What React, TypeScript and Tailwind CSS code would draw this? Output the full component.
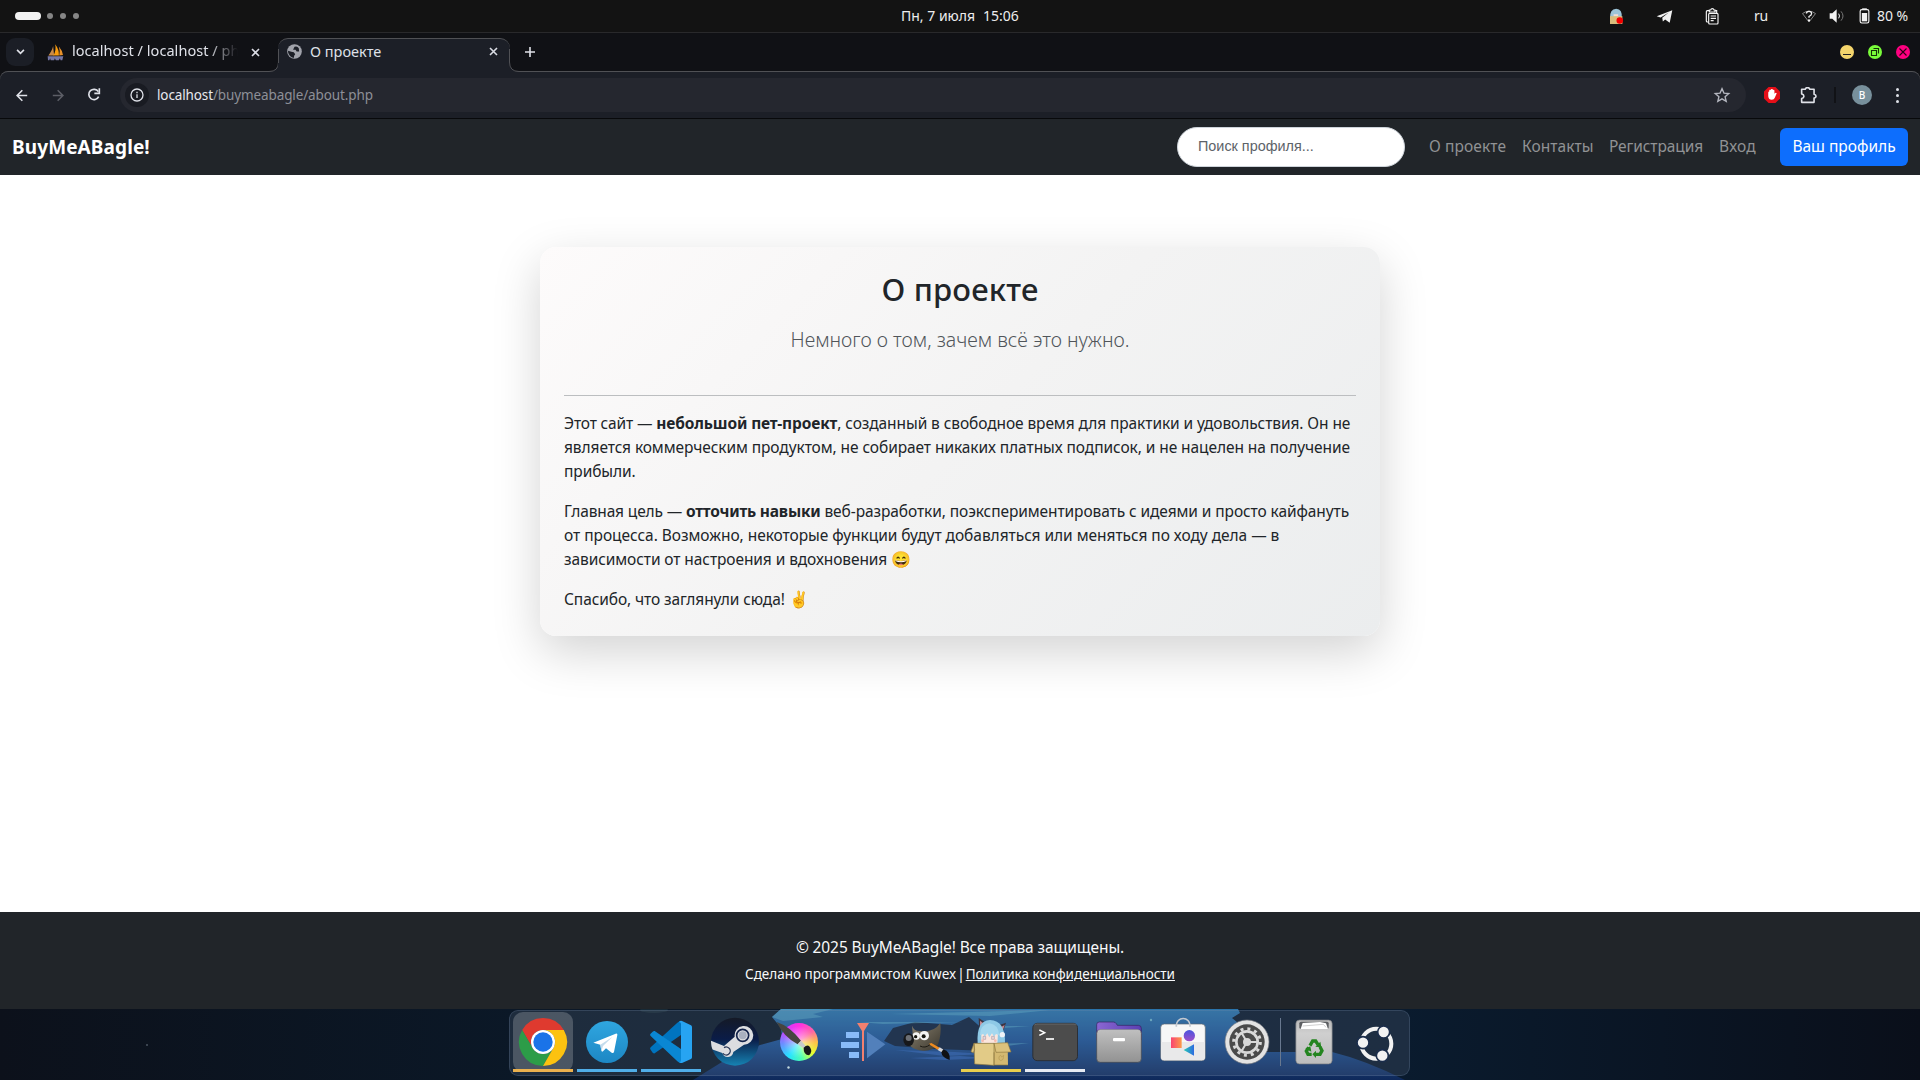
import type { ReactNode } from "react";

/* ---------- System bar ---------- */

function SystemBar() {
  return (
    <div className="flex h-8 items-center bg-[#131313] text-[14px] text-[#ededed]">
      <div className="flex w-[901px] items-center">
        <div className="ml-[15px] h-2 w-[26px] rounded-full bg-[#f2f2f2]" />
        <div className="ml-[6px] flex gap-[7px]">
          <div className="size-[6px] rounded-full bg-[#868686]" />
          <div className="size-[6px] rounded-full bg-[#868686]" />
          <div className="size-[6px] rounded-full bg-[#868686]" />
        </div>
      </div>
      <div className="flex pb-[2px] whitespace-pre">
        <span>Пн, 7 июля</span>
        <span className="ml-[8px]">15:06</span>
      </div>
      {/* tray */}
      <div className="ml-auto flex h-8 items-center">
        <svg viewBox="150 24 46 50" className="h-[17px] w-[15px]">
          <path d="M153 54 Q152 26 172 25 Q192 26 189 54Z" fill="#9cc4d8" />
          <path d="M164 42h14v8h-14z" fill="#f2ddd3" />
          <path d="M153 48h38v24h-38z" fill="#d9bd7c" />
          <circle cx="183" cy="61" r="10" fill="#f40000" />
        </svg>
        <svg viewBox="290 26 50 40" className="ml-[32px] h-[13px] w-[17px]">
          <path d="M291 45 L339 27 L331 65 L317 55 L310 61 L308 50 L328 34 L303 49Z" fill="#f2f2f2" />
        </svg>
        <svg viewBox="436 23 42 51" className="ml-[32px] h-[17px] w-[14px]" fill="none" stroke="#f2f2f2" strokeWidth="3.5">
          <path d="M446 65h-3q-3 0-3-3V34q0-3 3-3h6M466 31h5v7" />
          <path d="M449 35v-6h4q1-4 5-4t5 4h3v6z" />
          <rect x="447" y="39" width="28" height="32" rx="3" />
          <path d="M453 47h16M453 54h16M453 61h9" />
        </svg>
        <span className="ml-[35px] pb-[2px] tracking-[-0.2px]">ru</span>
        <svg viewBox="724 28 46 40" className="ml-[33px] h-[13px] w-[16px]" fill="none" stroke="#8a8a8a" strokeWidth="3">
          <path d="M747 65 L727 39 Q747 24 767 39Z" />
          <path d="M739 39q0-7 8-7t8 7q0 5-8 9v4" stroke="#f2f2f2" strokeWidth="4" />
          <circle cx="747" cy="60" r="1.5" stroke="#f2f2f2" strokeWidth="4" />
        </svg>
        <svg viewBox="808 27 48 42" className="ml-[12px] h-[14px] w-[16px]">
          <path d="M810 40h8l13-12v40l-13-12h-8z" fill="#f2f2f2" />
          <path d="M837 41q5 7 0 14" stroke="#f2f2f2" strokeWidth="3" fill="none" />
          <path d="M844 34q12 14 0 28" stroke="#777" strokeWidth="3" fill="none" />
        </svg>
        <svg viewBox="899 23 32 48" className="ml-[14px] h-[16px] w-[11px]">
          <path d="M908 24h14v5h-14z" fill="#f2f2f2" />
          <rect x="902" y="28" width="26" height="40" rx="5" fill="none" stroke="#f2f2f2" strokeWidth="3.5" />
          <path d="M907 38h16v25h-16z" fill="#f2f2f2" />
        </svg>
        <span className="mr-[12px] ml-[7px] pb-[2px] tracking-[-0.07px]">80 %</span>
      </div>
    </div>
  );
}

/* ---------- Browser chrome ---------- */

function CloseMark() {
  return (
    <svg viewBox="0 0 9 9" className="size-[9px]" stroke="#dadce4" strokeWidth="1.6">
      <path d="M1 1l7 7M8 1l-7 7" />
    </svg>
  );
}

function SailLogo() {
  return (
    <svg viewBox="132 132 50 50" className="size-[17px]">
      <path d="M136 166 Q148 150 150 138 L153 166Z" fill="#c98a48" />
      <path d="M151 166 Q160 150 156 133 Q168 148 167 166Z" fill="#f89c0e" />
      <path d="M168 166 Q171 150 167 139 Q178 152 179 164Z" fill="#e8912a" />
      <path d="M134 168h46l-3 12h-5l-2-6-3 6h-9l-3-6-2 6h-10l-2-6-2 6h-4z" fill="#7678a6" />
    </svg>
  );
}

function TabStrip() {
  return (
    <div className="relative z-10 flex h-[39px] border-t border-[#29292b] bg-[#101115] text-[14.500px] text-[#dfe1e8]">
      <div className="mt-[5px] ml-[6px] flex h-[28px] w-[28px] items-center justify-center rounded-[9px] bg-[#1b1e26]">
        <svg viewBox="0 0 10 7" className="h-[6px] w-[9px]" fill="none" stroke="#dfe1e8" strokeWidth="1.9">
          <path d="M1 1l4 4 4-4" />
        </svg>
      </div>
      <div className="ml-[13px] flex h-[38px] w-[222px] items-center">
        <SailLogo />
        <div className="ml-[8px] w-[172px] pb-[2px] whitespace-nowrap tracking-[0.05px] [mask-image:linear-gradient(to_right,#000_136px,transparent_166px)]">
          localhost / localhost / php
        </div>
        <div className="ml-[7px]">
          <CloseMark />
        </div>
      </div>
      <svg viewBox="0 0 10 10" className="mt-[29px] -mr-px size-[10px]" fill="#1c1f27">
        <path d="M0 9.500Q9.500 9.500 9.500 0H10V10H0Z" />
        <path d="M0 9.500Q9.500 9.500 9.500 0" fill="none" stroke="#505155" />
      </svg>
      <div className="mt-[5px] flex h-[34px] w-[232px] items-center rounded-t-[10px] border-t border-[#505155] bg-[#1c1f27] bg-[linear-gradient(#505155,#505155),linear-gradient(#505155,#505155)] bg-[length:1px_14px] bg-[position:left_10px,right_10px] bg-no-repeat pr-[12px] pb-[8px] pl-[9px]">
        <svg viewBox="803 135 42 42" className="size-[15px]">
          <circle cx="824" cy="156" r="20.500" fill="#a1a3ab" />
          <path d="M824 143q8-3 12 4l1 9h-7l-3-5h-7zM806 154l9 3 7 1 4 6-3 4-1 6q-13-3-16-16z" fill="#1c1f27" />
        </svg>
        <span className="ml-[8px]">О проекте</span>
        <div className="ml-auto">
          <CloseMark />
        </div>
      </div>
      <svg viewBox="0 0 10 10" className="mt-[29px] -ml-px size-[10px]" fill="#1c1f27">
        <path d="M10 9.500Q0.500 9.500 0.500 0H0V10H10Z" />
        <path d="M10 9.500Q0.500 9.500 0.500 0" fill="none" stroke="#505155" />
      </svg>
      <svg viewBox="0 0 10 10" className="mt-[14px] ml-[6px] size-[10px]" stroke="#dfe1e8" strokeWidth="1.6">
        <path d="M5 0v10M0 5h10" />
      </svg>
      <div className="mt-[12px] mr-[10px] ml-auto flex gap-[14px]">
        <svg viewBox="0 0 14 14" className="size-[14px]">
          <circle cx="7" cy="7" r="7" fill="#f4d56c" />
          <path d="M3 9.500h8" stroke="#222" />
        </svg>
        <svg viewBox="0 0 14 14" className="size-[14px]">
          <circle cx="7" cy="7" r="7" fill="#79fc3a" />
          <path d="M3.500 5.500h5v5h-5zM5.500 3.500h5v5" fill="none" stroke="#143008" strokeWidth="1.1" />
        </svg>
        <svg viewBox="0 0 14 14" className="size-[14px]">
          <circle cx="7" cy="7" r="7" fill="#ff0080" />
          <path d="M3.500 3.500l7 7M10.500 3.500l-7 7" stroke="#2c0016" strokeWidth="1.1" />
        </svg>
      </div>
    </div>
  );
}

function Toolbar() {
  return (
    <div className="bg-[#101115]">
      <div className="flex h-[48px] items-center rounded-t-[8px] border-b border-b-[#08090b] bg-[#1c1f27] pt-px [box-shadow:inset_0_1px_0_#505155]">
        <svg viewBox="44 265 36 40" className="ml-[16px] h-[13px] w-[12px]" fill="none" stroke="#dfe1e8" strokeWidth="5">
          <path d="M78 285H48M63 269l-16 16 16 16" />
        </svg>
        <svg viewBox="144 265 36 40" className="ml-[24px] h-[13px] w-[12px]" fill="none" stroke="#5c5e66" strokeWidth="5">
          <path d="M146 285h30M161 269l16 16-16 16" />
        </svg>
        <svg viewBox="244 264 40 42" className="ml-[23px] h-[14px] w-[14px]" fill="none" stroke="#dfe1e8" strokeWidth="5">
          <path d="M277 275a15.500 15.500 0 1 0 1 15" />
          <path d="M280 265v15h-15" />
        </svg>
        <div className="ml-[19px] flex h-[34px] w-[1626px] items-center rounded-full bg-[#25272f] pr-[15px] pl-[5px]">
          <div className="flex size-[24px] items-center justify-center rounded-full bg-[#191b22]">
            <svg viewBox="0 0 14 14" className="size-[14px]" fill="none" stroke="#dfe1e8" strokeWidth="1.3">
              <circle cx="7" cy="7" r="6" />
              <path d="M7 6.300V10M7 3.800v1.400" />
            </svg>
          </div>
          <div className="ml-[8px] text-[13.500px] tracking-[-0.12px] text-[#8d8f97]">
            <span className="text-[#e8e9ef]">localhost</span>/buymeabagle/about.php
          </div>
          <svg viewBox="0 0 24 24" className="ml-auto size-[18px]" fill="none" stroke="#b4b6bf" strokeWidth="1.800">
            <path d="M12 3.500l2.600 6 6.400.500-4.900 4.200 1.500 6.300L12 17.100l-5.600 3.400 1.500-6.300L3 10l6.400-.5z" />
          </svg>
        </div>
        <svg viewBox="611 261 49 49" className="ml-[18px] size-[16px]">
          <path d="M625 261h21l14 14v21l-14 14h-21l-14-14v-21z" fill="#e60f18" />
          <path d="M624 278q0-3 3-3v-3q0-3 4-2 1-3 4-3t4 3q4-1 4 3v9q4-6 7-2l-6 14q-2 6-9 6-10 0-11-11z" fill="#fff" />
        </svg>
        <svg viewBox="720 257 52 52" className="ml-[20px] size-[17px]" fill="none" stroke="#dfe1e8" strokeWidth="5">
          <path d="M725 264h11q1-5 7-5t7 5h13v15q6 1 6 6t-6 6v13h-38v-12q7-2 7-7t-7-7z" strokeLinejoin="round" />
        </svg>
        <div className="ml-[17px] h-[16px] w-[2px] bg-[#111216]" />
        <div className="ml-[16px] flex size-[20px] items-center justify-center rounded-full bg-[#78909c] text-[10px] font-medium text-white">
          B
        </div>
        <div className="ml-[24px] flex flex-col gap-[3px]">
          <div className="size-[3px] rounded-full bg-[#dfe1e8]" />
          <div className="size-[3px] rounded-full bg-[#dfe1e8]" />
          <div className="size-[3px] rounded-full bg-[#dfe1e8]" />
        </div>
      </div>
    </div>
  );
}

/* ---------- Site ---------- */

function SiteNav() {
  return (
    <nav className="flex h-[56px] items-center bg-[#212529] pr-3 pl-3 text-[15.500px] text-[#909294]">
      <span className="text-[19px] font-bold tracking-[0.1px] text-white">BuyMeABagle!</span>
      <div className="ml-auto flex h-[40px] w-[228px] items-center rounded-full border border-[#ced4da] bg-white pl-[20px] font-['Liberation_Sans',sans-serif] text-[14.400px] text-[#5d6369]">
        Поиск профиля...
      </div>
      <span className="ml-[24px] w-[93px] tracking-[0.09px]">О проекте</span>
      <span className="w-[87px] tracking-[0.05px]">Контакты</span>
      <span className="w-[110px] tracking-[-0.1px]">Регистрация</span>
      <span className="w-[61px] tracking-[0.25px]">Вход</span>
      <button className="h-[38px] w-[128px] rounded-[6px] bg-[#0d6efd] text-white">Ваш профиль</button>
    </nav>
  );
}

function AboutCard() {
  return (
    <section className="mx-auto h-[389px] w-[840px] rounded-2xl bg-[linear-gradient(135deg,#fdfbfb_0%,#f3f3f3_50%,#ebedee_100%)] px-6 pt-[23px] text-[15.500px] leading-6 tracking-[-0.09px] text-[#212529] shadow-[0_16px_48px_rgba(0,0,0,0.175)]">
      <h2 className="text-center text-[31px] leading-[38px] font-medium tracking-[0.2px]">О проекте</h2>
      <p className="mt-[17px] text-center text-[19.500px] leading-[30px] font-light tracking-normal text-[#50555a]">
        Немного о том, зачем всё это нужно.
      </p>
      <div className="mt-[40px] h-px bg-[#bcbec0]" />
      <div className="mt-[15px] whitespace-nowrap">
        <p>
          <span className="tracking-[-0.15px]">Этот сайт — </span>
          <b className="tracking-[-0.13px]">небольшой пет-проект</b>, созданный в свободное время для практики и
          удовольствия. Он не
          <br />
          <span className="tracking-[-0.08px]">
            является коммерческим продуктом, не собирает никаких платных подписок, и не нацелен на получение
          </span>
          <br />
          прибыли.
        </p>
        <p className="mt-4">
          <span className="tracking-[-0.15px]">Главная цель — </span>
          <b className="tracking-[-0.2px]">отточить навыки</b> веб-разработки, поэкспериментировать с идеями и просто
          кайфануть
          <br />
          <span className="tracking-[-0.04px]">
            от процесса. Возможно, некоторые функции будут добавляться или меняться по ходу дела — в
          </span>
          <br />
          зависимости от настроения и вдохновения <span className="text-[16px] leading-none">😄</span>
        </p>
        <p className="mt-4">
          Спасибо, что заглянули сюда! <span className="text-[16px] leading-none">✌️</span>
        </p>
      </div>
    </section>
  );
}

function SiteFooter() {
  return (
    <footer className="h-[97px] bg-[#212529] pt-[23px] text-center text-[#f8f9fa]">
      <p className="text-[15.500px] leading-6 tracking-[-0.11px]">© 2025 BuyMeABagle! Все права защищены.</p>
      <p className="mt-[5px] text-[13.500px] leading-[21px]">
        Сделано программистом Kuwex <span className="-mx-[2.500px]">|</span>{" "}
        <a className="underline">Политика конфиденциальности</a>
      </p>
    </footer>
  );
}

/* ---------- Desktop and dock ---------- */

function Wallpaper() {
  return (
    <svg viewBox="0 1009 1920 71" className="absolute inset-0 h-full w-full" preserveAspectRatio="none">
      <defs>
        <linearGradient id="sky" x1="0" x2="1">
          <stop offset="0" stopColor="#0c111b" />
          <stop offset=".27" stopColor="#0b1827" />
          <stop offset=".73" stopColor="#0a1b2e" />
          <stop offset="1" stopColor="#0a0f1a" />
        </linearGradient>
        <linearGradient id="sea" x1="0" y1="0" x2="0" y2="1">
          <stop offset="0" stopColor="#2a74aa" />
          <stop offset=".45" stopColor="#1c5294" />
          <stop offset="1" stopColor="#0f295a" />
        </linearGradient>
      </defs>
      <rect y="1009" width="1920" height="71" fill="url(#sky)" />
      <path
        d="M781 1009 L772 1017 L781 1028 L782 1039 L760 1045 L722 1062 L693 1080 H1405 Q1365 1060 1332 1052 H1262 L1256 1040 L1243 1027 L1232 1018 L1240 1013 L1238 1009Z"
        fill="url(#sea)"
      />
      <path d="M884 1041L893 1028 915 1022 952 1025 969 1017 985 1031 990 1051 935 1049 895 1046Z" fill="#10243f" />
      <path
        d="M781 1009h52l-20 5 10 3-40 4-11-4zM890 1014l160-4-60 6zM858 1022h105l-80 2zM985 1026h45l-40 3zM985 1044l44-1-30 4z"
        fill="#55a5c4"
        opacity=".55"
      />
      <path d="M895 1050l60 2 30 2-40 2zM910 1058l50-2 25 2-40 2z" fill="#2d62b4" opacity=".7" />
      <circle cx="788.500" cy="1067.500" r="1.200" fill="#d5eff0" />
      <circle cx="1151" cy="1020" r="1.200" fill="#6ab1c8" />
      <circle cx="147" cy="1045" r="1" fill="#4a5560" />
      <ellipse cx="654" cy="1010" rx="14" ry="3" fill="#4b6c6c" opacity=".2" />
    </svg>
  );
}

function ChromeIcon() {
  return (
    <svg viewBox="-6 -6 60 60">
      <path d="M24 12L44.800 12A24 24 0 0 0 3.200 12L13.600 30A12 12 0 0 1 24 12Z" fill="#df3a2f" />
      <path d="M34.400 30L24 48A24 24 0 0 1 3.200 12L13.600 30A12 12 0 0 0 34.400 30Z" fill="#2c9c48" />
      <path d="M24 12H44.800A24 24 0 0 1 24 48L34.400 30A12 12 0 0 0 24 12Z" fill="#fcc210" />
      <circle cx="24" cy="24" r="12" fill="#fff" />
      <circle cx="24" cy="24" r="9.700" fill="#1a73e8" />
    </svg>
  );
}

function TelegramIcon() {
  return (
    <svg viewBox="231 36 180 180">
      <defs>
        <linearGradient id="tg" x1="0" y1="0" x2="0" y2="1">
          <stop offset="0" stopColor="#2fa6e0" />
          <stop offset="1" stopColor="#1d87c4" />
        </linearGradient>
      </defs>
      <circle cx="321" cy="126" r="63" fill="url(#tg)" />
      <path d="M280 128L347 101Q353 99 352 105L342 156Q340 161 335 158L318 145 309 154Q305 157 304 151L301 134Z" fill="#fff" />
      <path d="M301 134L337 111 309 138 304 154Z" fill="#c4dcec" />
    </svg>
  );
}

function CodeIcon() {
  return (
    <svg viewBox="423 36 180 180">
      <path d="M451 148Q449 145 452 142L532 68Q537 63 544 63V104L464 160Q461 161 458 158Z" fill="#0074bf" />
      <path d="M451 102Q449 105 452 108L532 184Q537 189 544 189V148L464 93Q461 92 458 95Z" fill="#0a87d3" />
      <path d="M540 63Q543 62 546 63L573 76Q576 78 576 82V172Q576 175 573 177L546 189Q541 190 536 186 543 188 543 181V72Q543 65 536 67Z" fill="#27a4f2" />
    </svg>
  );
}

function SteamIcon() {
  return (
    <svg viewBox="615 36 180 180">
      <defs>
        <linearGradient id="st" x1="0" y1="0" x2="0" y2="1">
          <stop offset="0" stopColor="#151a26" />
          <stop offset=".45" stopColor="#0a1c48" />
          <stop offset="1" stopColor="#1683b3" />
        </linearGradient>
        <clipPath id="stc">
          <circle cx="705" cy="125" r="72" />
        </clipPath>
      </defs>
      <circle cx="705" cy="125" r="72" fill="url(#st)" />
      <g clipPath="url(#stc)">
        <path d="M630 121L672 138 704 110A28 28 0 1 1 732 134L700 156A17 17 0 0 1 667 159L630 146Z" fill="#dcdde0" />
        <circle cx="728" cy="106" r="18" fill="#dcdde0" stroke="#12224a" strokeWidth="5" />
        <circle cx="728" cy="106" r="12" fill="#a9b0bf" />
        <path d="M672 143a12 12 0 1 1-3 17" fill="none" stroke="#2a3a5a" strokeWidth="4" />
      </g>
    </svg>
  );
}

function KritaIcon() {
  return (
    <div className="relative size-[60px]">
      <div className="absolute top-[11px] left-[11px] size-[38px] rounded-full bg-[radial-gradient(circle,rgba(255,255,255,.6)_0%,rgba(255,255,255,0)_60%),conic-gradient(#ff2ee6,#ff62a8_50deg,#ffc04a_90deg,#e8ff30_130deg,#4dffb0_170deg,#25e4ff_215deg,#6d8cff_265deg,#d03cff_310deg,#ff2ee6)]" />
      <svg viewBox="807 36 180 180" className="absolute inset-0">
        <path d="M830 66Q868 78 903 122L893 133Q850 110 830 66Z" fill="#47453f" />
        <path d="M903 122L917 137 911 145 893 133Z" fill="#c9c9cb" />
        <path d="M911 143Q924 130 931 143T927 166Q910 164 911 143Z" fill="#17171a" />
      </svg>
    </div>
  );
}

function AlignIcon() {
  return (
    <svg viewBox="-21 36 180 180">
      <path d="M81 95L136 133 81 175Z" fill="#5280bb" />
      <path d="M18 96h39v18H18zM3 126h54v18H3zM27 156h30v18H27z" fill="#89bbf8" />
      <path d="M51 69h36L72 93v90h-6V93Z" fill="#f2806f" />
    </svg>
  );
}

function GimpIcon() {
  return (
    <svg viewBox="171 36 180 180">
      <defs>
        <linearGradient id="gm" x1="0" y1="0" x2="1" y2="1">
          <stop offset="0" stopColor="#8a8270" />
          <stop offset="1" stopColor="#3b372e" />
        </linearGradient>
      </defs>
      <path d="M216 77Q222 94 240 93 282 98 301 69 305 105 294 133 280 153 250 152 225 152 208 136 222 118 216 77Z" fill="url(#gm)" />
      <circle cx="229" cy="108" r="11" fill="#f5f5f3" />
      <circle cx="253" cy="107" r="14" fill="#f5f5f3" />
      <circle cx="227" cy="110" r="5" fill="#16160f" />
      <circle cx="251" cy="109" r="6" fill="#16160f" />
      <ellipse cx="206" cy="119" rx="16" ry="19" fill="#17181a" />
      <ellipse cx="206" cy="114" rx="9" ry="9" fill="#6d7075" />
      <path d="M266 132L274 129 299 143 294 150Z" fill="#ee8b20" />
      <path d="M299 142L311 149 305 157 293 150Z" fill="#d5d5d7" />
      <path d="M310 148Q332 155 329 180 305 172 304 157Z" fill="#101113" />
      <path d="M240 138Q255 146 270 134" stroke="#1e1b14" strokeWidth="3" fill="none" />
    </svg>
  );
}

function BoxedCharacterIcon() {
  return (
    <svg viewBox="363 36 180 180">
      <path d="M416 54L438 68 418 96ZM498 68L476 76 488 98Z" fill="#3c3440" />
      <path d="M420 62L430 70 420 84ZM494 75L482 82 488 92Z" fill="#c78791" />
      <path d="M413 130Q408 62 450 60 497 62 495 130Z" fill="#8ec9e6" />
      <path d="M424 98Q446 84 474 98L472 130H424Z" fill="#fbe6de" />
      <path d="M420 106Q420 74 448 70 476 74 478 106L468 102 462 110 456 100 448 112 442 100 434 110 430 102Z" fill="#a5d8ef" />
      <path d="M429 109h8v9h-8zM455 109h8v9h-8z" fill="#e8d9dc" stroke="#9a8d98" strokeWidth="1.500" />
      <circle cx="428" cy="122" r="4" fill="#f7b9ae" />
      <circle cx="466" cy="122" r="4" fill="#f7b9ae" />
      <circle cx="487" cy="104" r="8" fill="#f1f4f8" />
      <path d="M402 130H462V196L404 192Z" fill="#e2cb87" />
      <path d="M462 130H503L504 195H462Z" fill="#d4b971" />
      <path d="M402 130L393 155 400 158 404 150ZM462 130L503 128 513 156 468 157Z" fill="#dcc27c" stroke="#8f7840" strokeWidth="2" />
      <path d="M402 130H462V196L404 192ZM462 157V195H504" fill="none" stroke="#8f7840" strokeWidth="2" />
      <path d="M477 170l5-4 3 5 6-5-2 12q-7 8-12 0z" fill="none" stroke="#b69a55" strokeWidth="2" />
    </svg>
  );
}

function TerminalIcon() {
  return (
    <svg viewBox="555 36 180 180">
      <rect x="578.500" y="70" width="134" height="112" rx="13" fill="#4c4c4c" stroke="#2b2f36" strokeWidth="3" />
      <path d="M582 76q2-4 8-4h112q6 0 8 4" stroke="#7a7a7a" strokeWidth="2" fill="none" />
      <path d="M598 90L614 98 598 106" fill="none" stroke="#fff" strokeWidth="4.500" />
      <path d="M618 117h24" stroke="#fff" strokeWidth="5" />
    </svg>
  );
}

function FilesIcon() {
  return (
    <svg viewBox="747 36 180 180">
      <defs>
        <linearGradient id="fl" x1="0" y1="0" x2="0" y2="1">
          <stop offset="0" stopColor="#bfbfbf" />
          <stop offset="1" stopColor="#929292" />
        </linearGradient>
        <linearGradient id="fp" x1="0" x2="1">
          <stop offset="0" stopColor="#8b67d2" />
          <stop offset="1" stopColor="#5b3fb2" />
        </linearGradient>
      </defs>
      <path d="M770 110V74Q770 66 778 66H820Q826 66 829 71L832 76H895Q904 76 904 85V120H770Z" fill="url(#fp)" stroke="#30245c" strokeWidth="2" />
      <rect x="770" y="89" width="134" height="98" rx="11" fill="url(#fl)" stroke="#45484d" strokeWidth="2" />
      <path d="M774 94q3-4 8-4h110q6 0 9 4" stroke="#dadada" strokeWidth="2" fill="none" />
      <rect x="819" y="114" width="36" height="10" rx="3" fill="#fff" />
    </svg>
  );
}

function StoreIcon() {
  return (
    <svg viewBox="39 36 180 180">
      <defs>
        <linearGradient id="s1" x1="0" x2="1">
          <stop offset="0" stopColor="#fa4373" />
          <stop offset="1" stopColor="#fc9b49" />
        </linearGradient>
        <linearGradient id="s2" x1="0" y1="0" x2="0" y2="1">
          <stop offset="0" stopColor="#4855e0" />
          <stop offset="1" stopColor="#a14fc8" />
        </linearGradient>
        <linearGradient id="s3" x1="0" x2="1">
          <stop offset="0" stopColor="#26ccb4" />
          <stop offset="1" stopColor="#2e6ae0" />
        </linearGradient>
      </defs>
      <rect x="62" y="72" width="134" height="110" rx="11" fill="#f7f7f7" stroke="#5e6670" strokeWidth="2" />
      <path d="M109 80V76a20 20 0 0 1 41 0v4" fill="none" stroke="#c4c9d0" strokeWidth="5" />
      <path d="M63 126h132v45q0 10-10 10H73q-10 0-10-10z" fill="#e9e9ea" />
      <rect x="93" y="112" width="32" height="32" fill="url(#s1)" />
      <circle cx="148" cy="107" r="17" fill="url(#s2)" />
      <path d="M131 150L162 133V167Z" fill="url(#s3)" />
    </svg>
  );
}

function SettingsIcon() {
  return (
    <svg viewBox="231 36 180 180">
      <circle cx="321" cy="126" r="66" fill="#e3e3e3" stroke="#76797e" strokeWidth="2" />
      <circle cx="321" cy="126" r="53" fill="#4a4a4a" />
      <circle cx="321" cy="126" r="40" fill="none" stroke="#d8d8d8" strokeWidth="9" strokeDasharray="9 11.940" />
      <circle cx="321" cy="126" r="32" fill="none" stroke="#d8d8d8" strokeWidth="8" />
      <circle cx="321" cy="126" r="12" fill="#d8d8d8" />
      <path d="M321 126H352M321 126L305 99M321 126L305 153" stroke="#d8d8d8" strokeWidth="6" />
    </svg>
  );
}

function TrashIcon() {
  return (
    <svg viewBox="432 36 180 180">
      <defs>
        <linearGradient id="tr" x1="0" y1="0" x2="0" y2="1">
          <stop offset="0" stopColor="#b9b9b9" />
          <stop offset=".3" stopColor="#cfcfcf" />
          <stop offset="1" stopColor="#bdbdbd" />
        </linearGradient>
      </defs>
      <rect x="467.500" y="60" width="109" height="132" rx="11" fill="url(#tr)" stroke="#70747a" strokeWidth="2" />
      <rect x="478" y="65" width="88" height="22" rx="5" fill="#5d5f62" />
      <path d="M482 87L488 69 540 66 558 70 564 87Z" fill="#fff" />
      <path d="M488 78l62-5 8 9" fill="none" stroke="#b8b8b8" strokeWidth="2" />
      <g fill="none" stroke="#24851f" strokeWidth="10">
        <path d="M510 137L518 123H527L534 134" />
        <path d="M540 140L546 152 540 163H525" />
        <path d="M515 163H504L499 153 506 142" />
      </g>
      <path d="M526 140L544 142 541 125ZM528 152V174L517 163ZM496 146L511 139 514 155Z" fill="#24851f" />
    </svg>
  );
}

function UbuntuIcon() {
  return (
    <svg viewBox="618 36 180 180">
      <circle cx="709" cy="131" r="45" fill="none" stroke="#f2f2f2" strokeWidth="12" />
      <g fill="#f2f2f2" stroke="#1b2d4b" strokeWidth="5">
        <circle cx="669" cy="128" r="18" />
        <circle cx="731" cy="96" r="18" />
        <circle cx="727" cy="167" r="18" />
      </g>
    </svg>
  );
}

function DockItem({ children, className = "", bar }: { children: ReactNode; className?: string; bar?: string }) {
  return (
    <div className={`flex h-[60px] w-[60px] shrink-0 flex-col rounded-[10px] ${className}`}>
      <div className="size-[60px] shrink-0">{children}</div>
      {bar && <div className={`-mt-[3px] h-[3px] shrink-0 ${bar}`} />}
    </div>
  );
}

function Dock() {
  return (
    <div className="relative h-[71px] overflow-hidden bg-[#0b1827]">
      <Wallpaper />
      <div className="relative mt-px ml-[509px] flex h-[66px] w-[901px] gap-1 rounded-[9px] border border-[#7890b0]/25 bg-[#6e7c94]/20 px-[3px] pt-px">
        <DockItem bar="bg-[#eab04e]" className="bg-white/20">
          <ChromeIcon />
        </DockItem>
        <DockItem bar="bg-[#50aee8]">
          <TelegramIcon />
        </DockItem>
        <DockItem bar="bg-[#50aee8]">
          <CodeIcon />
        </DockItem>
        <DockItem>
          <SteamIcon />
        </DockItem>
        <DockItem>
          <KritaIcon />
        </DockItem>
        <DockItem>
          <AlignIcon />
        </DockItem>
        <DockItem>
          <GimpIcon />
        </DockItem>
        <DockItem bar="bg-[#e8cd4e]">
          <BoxedCharacterIcon />
        </DockItem>
        <DockItem bar="bg-[#e6eaf2]">
          <TerminalIcon />
        </DockItem>
        <DockItem>
          <FilesIcon />
        </DockItem>
        <DockItem>
          <StoreIcon />
        </DockItem>
        <DockItem>
          <SettingsIcon />
        </DockItem>
        <div className="-mx-px mt-[6px] h-[48px] w-px shrink-0 bg-[#68788f]" />
        <DockItem>
          <TrashIcon />
        </DockItem>
        <DockItem className="-ml-[2px]">
          <UbuntuIcon />
        </DockItem>
      </div>
    </div>
  );
}

export default function App() {
  return (
    <div className="flex h-[1080px] w-[1920px] flex-col overflow-hidden bg-white font-['Noto_Sans',sans-serif]">
      <SystemBar />
      <TabStrip />
      <Toolbar />
      <SiteNav />
      <main className="flex-1 pt-[72px]">
        <AboutCard />
      </main>
      <SiteFooter />
      <Dock />
    </div>
  );
}
